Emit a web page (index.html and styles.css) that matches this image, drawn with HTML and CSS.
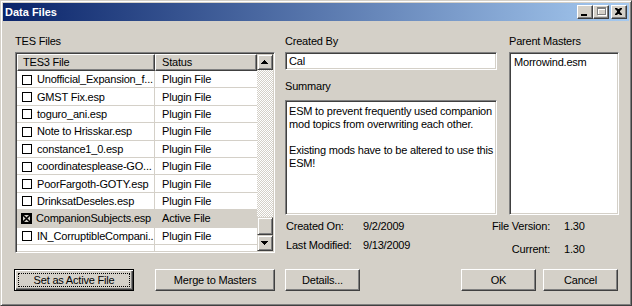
FILE: index.html
```html
<!DOCTYPE html>
<html lang="en">
    <head>
        <meta charset="UTF-8" />
        <title>Data Files</title>
        <link rel="stylesheet" href="styles.css">
    </head>
    <body>
        <div class="window">
            <div class="titlebar">
                <span class="title">Data Files</span>
                <div class="caption-buttons">
                    <span class="cap-btn">
                        <svg width="14" height="12" viewBox="0 0 14 12"><rect x="3" y="8" width="6" height="2" fill="#000"/></svg>
                    </span>
                    <span class="cap-btn">
                        <svg width="14" height="12" viewBox="0 0 14 12">
                            <path d="M3 1h9v8h-9z M4 3v5h7v-5z" fill="#fff" transform="translate(1 1)"/>
                            <path d="M3 1h9v8h-9z M4 3v5h7v-5z" fill="#808080" fill-rule="evenodd"/>
                        </svg>
                    </span>
                    <span class="cap-btn close">
                        <svg width="14" height="12" viewBox="0 0 14 12">
                            <path d="M3 2h2l1 1h1l1-1h2v1l-2 2v1l2 2v1h-2l-1-1h-1l-1 1h-2v-1l2-2v-1l-2-2z" fill="#000"/>
                        </svg>
                    </span>
                </div>
            </div>

            <div class="client">
                <div class="panes">
                    <div class="files-pane">
                        <div class="label">TES Files</div>
                        <div class="listview">
                            <div class="lv-body">
                                <div class="lv-header">
                                    <div class="hd col-file">TES3 File</div>
                                    <div class="hd col-status">Status</div>
                                </div>
                                <div class="lv-row">
                                    <div class="cell col-file"><span class="check"></span>Unofficial_Expansion_f...</div>
                                    <div class="cell col-status">Plugin File</div>
                                </div>
                                <div class="lv-row">
                                    <div class="cell col-file"><span class="check"></span>GMST Fix.esp</div>
                                    <div class="cell col-status">Plugin File</div>
                                </div>
                                <div class="lv-row">
                                    <div class="cell col-file"><span class="check"></span>toguro_ani.esp</div>
                                    <div class="cell col-status">Plugin File</div>
                                </div>
                                <div class="lv-row">
                                    <div class="cell col-file"><span class="check"></span>Note to Hrisskar.esp</div>
                                    <div class="cell col-status">Plugin File</div>
                                </div>
                                <div class="lv-row">
                                    <div class="cell col-file"><span class="check"></span>constance1_0.esp</div>
                                    <div class="cell col-status">Plugin File</div>
                                </div>
                                <div class="lv-row">
                                    <div class="cell col-file"><span class="check"></span>coordinatesplease-GO...</div>
                                    <div class="cell col-status">Plugin File</div>
                                </div>
                                <div class="lv-row">
                                    <div class="cell col-file"><span class="check"></span>PoorFargoth-GOTY.esp</div>
                                    <div class="cell col-status">Plugin File</div>
                                </div>
                                <div class="lv-row">
                                    <div class="cell col-file"><span class="check"></span>DrinksatDeseles.esp</div>
                                    <div class="cell col-status">Plugin File</div>
                                </div>
                                <div class="lv-row selected">
                                    <div class="cell col-file">
                                        <svg class="check-x" width="11" height="11" viewBox="0 0 11 11">
                                            <rect x="0.5" y="0.5" width="10" height="10" fill="none" stroke="#000"/>
                                            <rect x="1.5" y="1.5" width="8" height="8" fill="none" stroke="#000"/>
                                            <path d="M2 2l7 7M9 2l-7 7" stroke="#000" stroke-width="1.6"/>
                                        </svg>CompanionSubjects.esp
                                    </div>
                                    <div class="cell col-status">Active File</div>
                                </div>
                                <div class="lv-row">
                                    <div class="cell col-file"><span class="check"></span>IN_CorruptibleCompani...</div>
                                    <div class="cell col-status">Plugin File</div>
                                </div>
                                <div class="lv-row empty">
                                    <div class="cell col-file"></div>
                                    <div class="cell col-status"></div>
                                </div>
                            </div>
                            <div class="vscroll">
                                <div class="sb-btn">
                                    <svg width="14" height="14" viewBox="0 0 14 14"><path d="M6 5h1v1h1v1h1v1h1v1h-7v-1h1v-1h1v-1h1z" fill="#000"/></svg>
                                </div>
                                <div class="sb-track"></div>
                                <div class="sb-thumb"></div>
                                <div class="sb-btn">
                                    <svg width="14" height="14" viewBox="0 0 14 14"><path d="M3 5h7v1h-1v1h-1v1h-1v1h-1v-1h-1v-1h-1v-1h-1z" fill="#000"/></svg>
                                </div>
                            </div>
                        </div>
                    </div>

                    <div class="info-pane">
                        <div class="info-top">
                            <div class="details">
                                <div class="label">Created By</div>
                                <div class="field author">Cal</div>
                                <div class="label summary-label">Summary</div>
                                <div class="field summary">ESM to prevent frequently used companion<br>mod topics from overwriting each other.<br><br>Existing mods have to be altered to use this<br>ESM!</div>
                            </div>
                            <div class="masters">
                                <div class="label">Parent Masters</div>
                                <div class="field master-list">Morrowind.esm</div>
                            </div>
                        </div>
                        <div class="meta">
                            <div class="dates">
                                <span>Created On:</span><span>9/2/2009</span>
                                <span>Last Modified:</span><span>9/13/2009</span>
                            </div>
                            <div class="versions">
                                <span class="key">File Version:</span><span>1.30</span>
                                <span class="key">Current:</span><span>1.30</span>
                            </div>
                        </div>
                    </div>
                </div>

                <div class="actions">
                    <button class="btn default wide"><span class="focus">Set as Active File</span></button>
                    <button class="btn wide merge">Merge to Masters</button>
                    <button class="btn details-btn">Details...</button>
                    <button class="btn ok">OK</button>
                    <button class="btn cancel">Cancel</button>
                </div>
            </div>
        </div>
    </body>
</html>
```

FILE: styles.css
```css
* {
    box-sizing: border-box;
}

html,
body {
    margin: 0;
    padding: 0;
}

body {
    width: 632px;
    height: 306px;
    overflow: hidden;
    background: #d4d0c8;
    color: #000;
    font-family: "Liberation Sans", Arial, sans-serif;
    font-size: 11px;
    line-height: 13px;
    letter-spacing: -0.2px;
}

.window {
    width: 632px;
    height: 306px;
    display: flex;
    flex-direction: column;
    padding: 2px;
    background: #d4d0c8;
    border: 1px solid;
    border-color: #d4d0c8 #404040 #404040 #d4d0c8;
    box-shadow: inset 1px 1px #fff, inset -1px -1px #808080;
}

/* caption */
.titlebar {
    height: 18px;
    display: flex;
    align-items: center;
    padding: 0 2px;
    background: linear-gradient(to right, #0a246a, #a6caf0);
}

.title {
    color: #fff;
    font-weight: bold;
    letter-spacing: 0;
}

.caption-buttons {
    margin-left: auto;
    display: flex;
}

.cap-btn {
    width: 16px;
    height: 14px;
    display: block;
    background: #d4d0c8;
    border: 1px solid;
    border-color: #fff #404040 #404040 #fff;
    box-shadow: inset -1px -1px #808080;
}

.cap-btn svg {
    display: block;
}

.cap-btn.close {
    margin-left: 2px;
}

/* body */
.client {
    flex: 1;
    padding: 14px 11px 0 11px;
}

.panes {
    display: flex;
}

.label {
    height: 13px;
    white-space: nowrap;
}

.files-pane {
    width: 260px;
    margin-left: 1px;
}

.listview {
    height: 201px;
    margin-top: 4px;
    display: flex;
    padding: 1px;
    background: #fff;
    border: 1px solid;
    border-color: #808080 #fff #fff #808080;
    box-shadow: inset 1px 1px #404040, inset -1px -1px #d4d0c8;
}

.lv-body {
    flex: 1;
    display: flex;
    flex-direction: column;
    overflow: hidden;
}

.lv-header {
    height: 17px;
    display: flex;
    flex: none;
}

.hd {
    background: #d4d0c8;
    padding: 1px 0 0 5px;
    border: 1px solid;
    border-color: #fff #404040 #404040 #fff;
    box-shadow: inset -1px -1px #808080;
    white-space: nowrap;
}

.col-file {
    width: 138px;
}

.col-status {
    width: 102px;
}

.hd.col-status {
    padding-left: 6px;
}

.lv-row {
    height: 17.4px;
    flex: none;
    display: flex;
    border-bottom: 1px solid #d4d0c8;
}

.lv-row.empty {
    flex: 1;
    border-bottom: 0;
}

.lv-row.selected {
    background: #d4d0c8;
}

.cell {
    display: flex;
    align-items: center;
    padding: 1px 0 0 5px;
    white-space: nowrap;
    overflow: hidden;
}

.cell.col-file {
    border-right: 1px solid #d4d0c8;
}

.cell.col-status {
    padding-left: 7px;
}

.check {
    width: 10px;
    height: 10px;
    flex: none;
    margin: 0 5px 0 0;
    border: 1px solid #000;
    background: #fff;
}

.check-x {
    flex: none;
    margin: 0 4px 0 -1px;
}

/* scrollbar */
.vscroll {
    width: 16px;
    display: flex;
    flex-direction: column;
}

.sb-btn,
.sb-thumb {
    flex: none;
    background: #d4d0c8;
    border: 1px solid;
    border-color: #d4d0c8 #404040 #404040 #d4d0c8;
    box-shadow: inset 1px 1px #fff, inset -1px -1px #808080;
}

.sb-btn {
    height: 16px;
}

.sb-btn svg {
    display: block;
}

.sb-thumb {
    height: 18px;
}

.sb-track {
    flex: 1;
    background: repeating-conic-gradient(#fff 0 25%, #d4d0c8 0 50%) 0 0 / 2px 2px;
}

/* right side */
.info-pane {
    width: 334px;
    margin-left: 10px;
}

.info-top {
    display: flex;
}

.details {
    width: 212px;
}

.masters {
    width: 110px;
    margin-left: 12px;
}

.field {
    background: #fff;
    border: 1px solid;
    border-color: #808080 #fff #fff #808080;
    box-shadow: inset 1px 1px #404040, inset -1px -1px #d4d0c8;
    white-space: nowrap;
    overflow: hidden;
}

.author {
    height: 18px;
    margin-top: 4px;
    padding: 2px 0 0 3px;
}

.summary-label {
    margin-top: 10px;
}

.summary {
    height: 115px;
    margin-top: 7px;
    padding: 4px 0 0 3px;
}

.master-list {
    height: 163px;
    margin-top: 4px;
    padding: 3px 0 0 4px;
}

.meta {
    display: flex;
    margin-top: 5px;
    white-space: nowrap;
}

.dates {
    width: 197px;
    display: grid;
    grid-template-columns: 77px auto;
    row-gap: 2px;
    padding-left: 1px;
}

.versions {
    display: grid;
    grid-template-columns: 68px auto;
    column-gap: 14px;
    row-gap: 10px;
}

.versions .key {
    text-align: right;
}

/* dialog buttons */
.actions {
    display: flex;
    margin-top: 13px;
}

.btn {
    height: 22px;
    width: 75px;
    padding: 0;
    margin: 0;
    font: inherit;
    letter-spacing: inherit;
    color: #000;
    background: #d4d0c8;
    border: 1px solid;
    border-color: #fff #404040 #404040 #fff;
    box-shadow: inset -1px -1px #808080;
    display: flex;
    align-items: center;
    justify-content: center;
}

.btn.wide {
    width: 120px;
}

.btn.default {
    border-color: #000;
    padding: 3px;
    box-shadow: inset 1px 1px #fff, inset -1px -1px #404040, inset -2px -2px #808080;
}

.focus {
    width: 100%;
    height: 100%;
    display: flex;
    align-items: center;
    justify-content: center;
    border: 1px dotted #000;
}

.merge {
    margin-left: 21px;
}

.details-btn {
    margin-left: 10px;
}

.ok {
    margin-left: auto;
}

.cancel {
    margin-left: 7px;
}
```
